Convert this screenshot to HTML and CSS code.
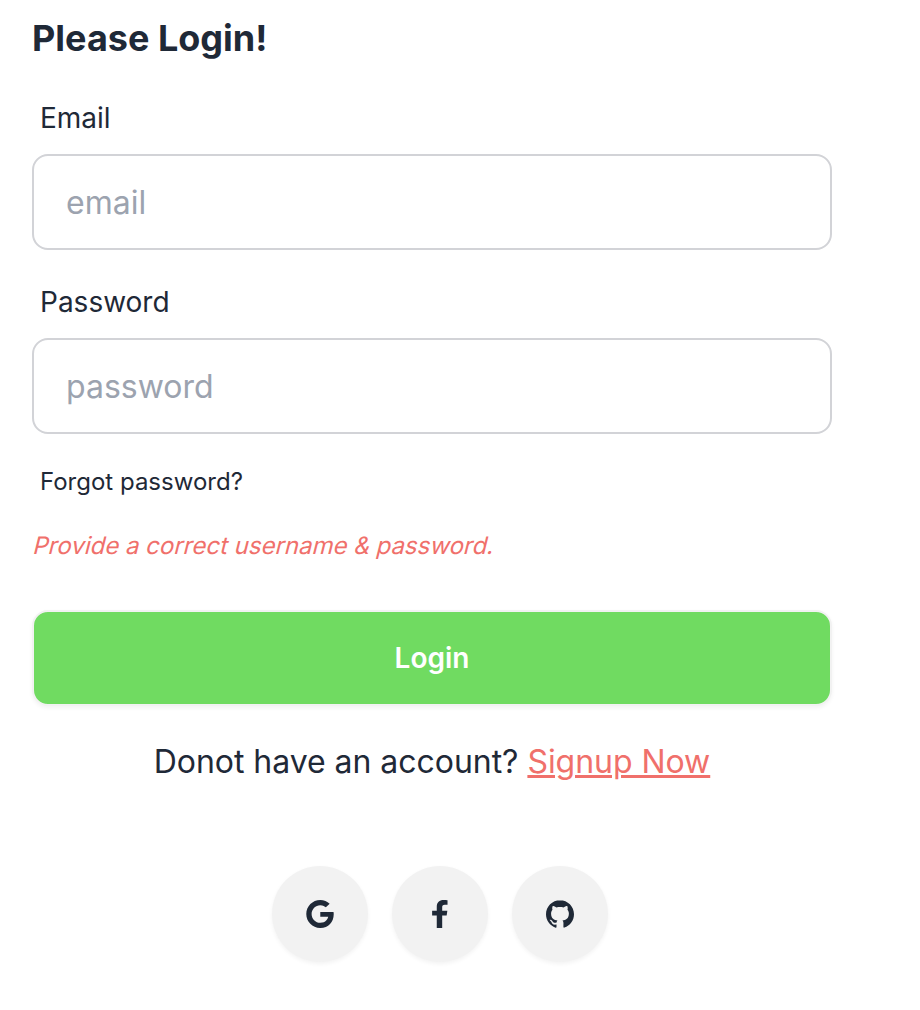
FILE: index.html
```html
<!DOCTYPE html>
<html lang="en">
<head>
<meta charset="utf-8">
<title>Login</title>
<link rel="stylesheet" href="styles.css">
</head>
<body>
<main class="login">
  <h1 class="title">Please Login!</h1>
  <form class="form">
    <label class="label" for="email">Email</label>
    <input class="input" id="email" type="email" placeholder="email">
    <label class="label" for="password">Password</label>
    <input class="input" id="password" type="password" placeholder="password">
    <a class="forgot">Forgot password?</a>
    <p class="error">Provide a correct username &amp; password.</p>
    <button class="submit" type="button">Login</button>
  </form>
  <p class="signup">Donot have an account? <a class="signup-link">Signup Now</a></p>
  <div class="social">
    <button class="circle" type="button" aria-label="Google"><svg class="icon" viewBox="0 0 32 32"><path d="M16.318 13.714v5.484h9.078c-0.37 2.354-2.745 6.901-9.078 6.901-5.458 0-9.917-4.521-9.917-10.099s4.458-10.099 9.917-10.099c3.109 0 5.193 1.318 6.38 2.464l4.339-4.182c-2.786-2.599-6.396-4.182-10.719-4.182-8.844 0-16 7.151-16 16s7.156 16 16 16c9.234 0 15.365-6.49 15.365-15.635 0-1.052-0.115-1.854-0.255-2.651z"/></svg></button>
    <button class="circle" type="button" aria-label="Facebook"><svg class="icon" viewBox="0 0 32 32"><path d="M12.3 32V17.8H7V12.4h5.3V7.8C12.3 2.7 15.4 0 20 0c2.1 0 4 .15 4.6.23v5.3h-3.1c-2.5 0-3 1.2-3 2.9v3.97h5.9l-.8 5.4h-5.1V32z"/></svg></button>
    <button class="circle" type="button" aria-label="GitHub"><svg class="icon" viewBox="0 0 32 32"><path d="M16 0.396c-8.839 0-16 7.167-16 16 0 7.073 4.584 13.068 10.937 15.183 0.803 0.151 1.093-0.344 1.093-0.772 0-0.38-0.009-1.385-0.015-2.719-4.453 0.964-5.391-2.151-5.391-2.151-0.729-1.844-1.781-2.339-1.781-2.339-1.448-0.989 0.115-0.968 0.115-0.968 1.604 0.109 2.448 1.645 2.448 1.645 1.427 2.448 3.744 1.74 4.661 1.328 0.14-1.031 0.557-1.74 1.011-2.135-3.552-0.401-7.287-1.776-7.287-7.907 0-1.751 0.62-3.177 1.645-4.297-0.177-0.401-0.719-2.031 0.141-4.235 0 0 1.339-0.427 4.4 1.641 1.281-0.355 2.641-0.532 4-0.541 1.36 0.009 2.719 0.187 4 0.541 3.043-2.068 4.381-1.641 4.381-1.641 0.859 2.204 0.317 3.833 0.161 4.235 1.015 1.12 1.635 2.547 1.635 4.297 0 6.145-3.74 7.5-7.296 7.891 0.556 0.479 1.077 1.464 1.077 2.959 0 2.14-0.02 3.864-0.02 4.385 0 0.416 0.28 0.916 1.104 0.755 6.4-2.093 10.979-8.093 10.979-15.156 0-8.833-7.161-16-16-16z"/></svg></button>
  </div>
</main>
</body>
</html>
```
FILE: styles.css
```css
* { box-sizing: border-box; }
body { margin: 0; background: #fff; color: #1f2937; font-family: Inter, sans-serif; }
.login { width: 832px; padding: 10px 0 0 32px; }
.title { margin: 0; font-size: 36px; line-height: 56px; font-weight: 700; }
.form { display: flex; flex-direction: column; }
.label { margin-top: 32px; padding: 0 8px; font-size: 28px; line-height: 40px; height: 56px; }
.input { width: 800px; height: 96px; padding: 0 32px; border: 2px solid #d2d3d7; border-radius: 16px; background: #fff; font: 32px/48px Inter, sans-serif; color: inherit; }
.input::placeholder { color: #9ca3af; opacity: 1; }
.forgot { margin-top: 32px; padding: 0 8px; font-size: 24px; line-height: 32px; }
.error { margin: 32px 0 0; padding-left: 2px; font-size: 24px; line-height: 32px; color: #f0706b; transform: skewX(-14deg); }
.submit { height: 96px; margin-top: 48px; border: 2px solid #f2f2f2; border-radius: 16px; background: #70db61; color: #fff; font: 600 28px/1 Inter, sans-serif; box-shadow: 0 2px 4px rgba(0,0,0,.05); }
.signup { margin: 32px 0 0; text-align: center; font-size: 32px; line-height: 48px; letter-spacing: -0.04px; }
.signup-link { color: #f0706b; text-decoration: underline; text-decoration-thickness: 3px; }
.social { display: flex; justify-content: center; gap: 24px; margin-top: 80px; padding: 0 0 16px 16px; }
.circle { display: grid; place-items: center; width: 96px; height: 96px; padding: 0; border: 0; border-radius: 50%; background: #f2f2f2; color: #1f2937; box-shadow: 0 2px 4px rgba(0,0,0,.05); }
.icon { width: 28px; height: 28px; fill: currentColor; }
```
